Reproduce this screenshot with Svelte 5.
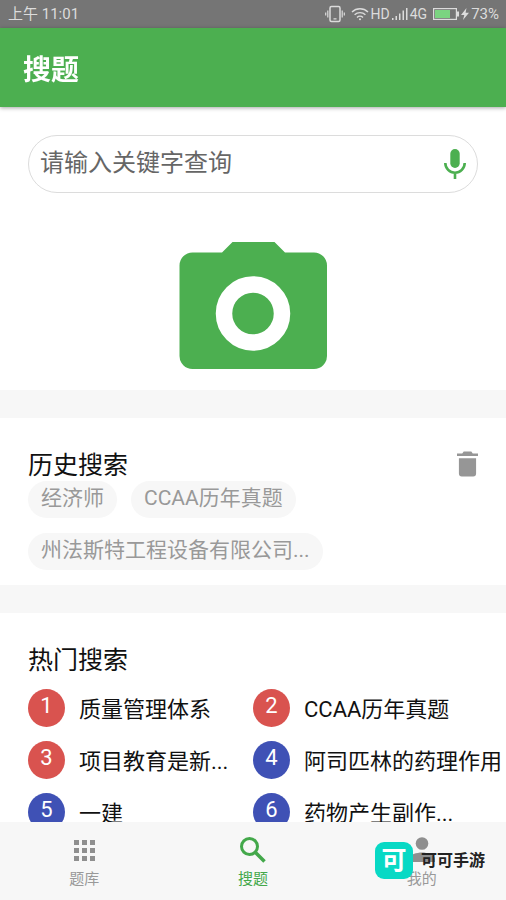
<script>
  let keyword = $state("");
  let history = $state(["经济师", "CCAA历年真题", "州法斯特工程设备有限公司..."]);

  const hot = [
    "质量管理体系",
    "CCAA历年真题",
    "项目教育是新...",
    "阿司匹林的药理作用",
    "一建",
    "药物产生副作...",
  ];

  function clearHistory() {
    history = [];
  }
</script>

<div class="app">
  <div class="status">
    <span>上午 11:01</span>
    <div class="status-icons">
      <svg width="20" height="18" viewBox="0 0 20 18" fill="none" stroke="#dcdcdc">
        <rect x="5" y="1.5" width="10" height="15" rx="1.5" stroke-width="1.5" />
        <path d="M8.5 13.8h3M2.8 5.5v7M17.2 5.5v7M.7 7.5v3M19.3 7.5v3" stroke-width="1.2" />
      </svg>
      <svg class="wifi" width="18" height="14" viewBox="0 0 18 14" fill="none" stroke="#dcdcdc" stroke-width="1.4">
        <path d="M1 5a11.5 11.5 0 0 1 16 0M3.6 7.8a7.8 7.8 0 0 1 10.8 0M6 10.4a4.3 4.3 0 0 1 6 0" />
        <circle cx="9" cy="12.3" r="1" fill="#dcdcdc" stroke="none" />
      </svg>
      <span class="net">HD</span>
      <svg width="16" height="14" viewBox="0 0 16 14" fill="#dcdcdc">
        <path d="M0 11h1.5v2H0zM3.5 9H5v4H3.5zM7 6.5h1.5V13H7zM10.5 3.5H12V13h-1.5zM14 1h1.5v12H14z" />
      </svg>
      <span class="net">4G</span>
      <svg class="battery" width="26" height="12" viewBox="0 0 26 12">
        <rect x=".6" y=".6" width="22.8" height="10.8" fill="none" stroke="#dcdcdc" stroke-width="1.2" />
        <rect x="2" y="2" width="15" height="8" fill="#7bd481" />
        <path d="M24 3.5h2v5h-2z" fill="#dcdcdc" />
      </svg>
      <svg width="8" height="12" viewBox="0 0 8 12" fill="#dcdcdc">
        <path d="M5.5 0 0 7h3.3L2 12l6-7.2H4.6z" />
      </svg>
      <span>73%</span>
    </div>
  </div>

  <header>
    <h1>搜题</h1>
  </header>

  <main>
    <section class="search">
      <div class="search-box">
        <input type="text" aria-label="搜索" placeholder="请输入关键字查询" bind:value={keyword} />
        <button aria-label="语音">
          <svg width="22" height="30" viewBox="0 0 22 30">
            <rect x="6.3" y="0" width="9.4" height="19" rx="4.7" fill="#4caf50" />
            <path d="M1.3 14a9.7 9.7 0 0 0 19.4 0M11 23.5V30" fill="none" stroke="#4caf50" stroke-width="2.6" />
          </svg>
        </button>
      </div>
      <button class="camera" aria-label="拍照">
        <svg width="148" height="127" viewBox="-0.5 0 148 127">
          <path
            fill="#4caf50"
            d="M53 0H95L105.5 10.5H134.5A13 13 0 0 1 147.5 23.5V114A13 13 0 0 1 134.5 127H13A13 13 0 0 1 0 114V23.5A13 13 0 0 1 13 10.5H42.5Z"
          />
          <circle cx="73.5" cy="71.5" r="29" fill="none" stroke="#fff" stroke-width="16.5" />
        </svg>
      </button>
    </section>

    <section class="history">
      <div class="section-head">
        <h2>历史搜索</h2>
        <button aria-label="清空" onclick={clearHistory}>
          <svg width="21" height="26" viewBox="0 0 22 26" fill="#969696">
            <path d="M0 2h5.5L7 0h8l1.5 2H22v2.7H0zM2 7h18v16a3 3 0 0 1-3 3H5a3 3 0 0 1-3-3z" />
          </svg>
        </button>
      </div>
      <div class="chips">
        {#each history as item}
          <button class="chip" onclick={() => (keyword = item)}>{item}</button>
        {/each}
      </div>
    </section>

    <section class="hot">
      <h2>热门搜索</h2>
      <ol>
        {#each hot as item, i}
          <li>
            <span class="rank" class:top={i < 3}>{i + 1}</span>
            <a href="#hot-{i + 1}">{item}</a>
          </li>
        {/each}
      </ol>
    </section>
  </main>

  <nav>
    <a href="#bank">
      <svg width="28" height="28" viewBox="0 0 28 28" fill="#8f8f8f">
        <path d="M4 4h5v5H4zM12 4h5v5h-5zM20 4h5v5h-5zM4 12h5v5H4zM12 12h5v5h-5zM20 12h5v5h-5zM4 20h5v5H4zM12 20h5v5h-5zM20 20h5v5h-5z" />
      </svg>
      <span>题库</span>
    </a>
    <a href="#search" class="active">
      <svg width="28" height="28" viewBox="0 0 28 28" fill="none" stroke="#43a84a">
        <circle cx="10.5" cy="10.5" r="8" stroke-width="3" />
        <path d="M16.5 16.5 25.5 25.5" stroke-width="3.6" />
      </svg>
      <span>搜题</span>
    </a>
    <a href="#me">
      <svg width="28" height="28" viewBox="0 0 28 28" fill="#8f8f8f">
        <circle cx="14" cy="7.5" r="6.3" />
        <path d="M1 26v-3c0-4.5 8-6.5 13-6.5s13 2 13 6.5v3z" />
      </svg>
      <span>我的</span>
    </a>
    <div class="brand">
      <span class="brand-logo">可</span>
      <span>可可手游</span>
    </div>
  </nav>
</div>

<style>
  :global(body) {
    margin: 0;
  }

  .app {
    height: 100vh;
    display: flex;
    flex-direction: column;
    background: #fff;
    color: #111;
    font-family: Roboto, "Noto Sans CJK SC", sans-serif;
  }

  h1,
  h2 {
    margin: 0;
  }

  button {
    padding: 0;
    border: none;
    background: none;
    font: inherit;
    color: inherit;
    cursor: pointer;
  }

  a {
    color: inherit;
    text-decoration: none;
  }

  svg {
    display: block;
  }

  .status {
    height: 28px;
    flex: none;
    display: flex;
    justify-content: space-between;
    align-items: center;
    padding: 0 7px 0 8px;
    background: #757575;
    color: #dcdcdc;
    font-size: 15px;
    line-height: 30px;
  }

  .status-icons {
    display: flex;
    align-items: center;
    gap: 2px;
  }

  .net {
    font-size: 14px;
  }

  .wifi,
  .battery {
    margin-left: 4px;
  }

  header {
    position: relative;
    z-index: 1;
    flex: none;
    padding: 23px 23px 16px;
    background: #4caf50;
    box-shadow: 0 1px 4px rgba(0, 0, 0, 0.35);
  }

  h1 {
    color: #fff;
    font-size: 28px;
    font-weight: 700;
    line-height: 40px;
  }

  main {
    flex: 1;
    min-height: 0;
    display: flex;
    flex-direction: column;
    gap: 28px;
    overflow-x: hidden;
    overflow-y: auto;
    scrollbar-width: none;
    background: #f7f7f7;
  }

  section {
    flex: none;
    padding: 28px;
    background: #fff;
  }

  .search {
    padding-bottom: 21px;
  }

  .search-box {
    display: flex;
    align-items: center;
    padding: 0 11px;
    border: 1px solid #dcdcdc;
    border-radius: 29px;
  }

  .search-box input {
    flex: 1;
    min-width: 0;
    height: 56px;
    padding: 0 0 2px;
    border: none;
    outline: none;
    background: none;
    font: inherit;
    font-size: 24px;
    box-sizing: border-box;
  }

  .search-box input::placeholder {
    color: #666;
    opacity: 1;
  }

  .camera {
    display: block;
    margin: 49px auto 0;
  }

  .history {
    padding-bottom: 15px;
  }

  .section-head {
    display: flex;
    justify-content: space-between;
    align-items: center;
  }

  h2 {
    padding-top: 4px;
    font-size: 25px;
    font-weight: 400;
    line-height: 31px;
  }

  .chips {
    display: flex;
    flex-wrap: wrap;
    gap: 15px 14px;
  }

  .chip {
    padding: 0 13px 2px;
    border-radius: 19px;
    background: #f7f7f7;
    color: #999;
    font-size: 21px;
    line-height: 35px;
  }

  ol {
    display: grid;
    grid-template-columns: 1fr 1fr;
    row-gap: 14px;
    margin: 13px 0 0;
    padding: 0;
    list-style: none;
  }

  li {
    display: flex;
    align-items: center;
    gap: 14px;
    min-width: 0;
    font-size: 22px;
    line-height: 34px;
    white-space: nowrap;
  }

  li a {
    padding-top: 4px;
  }

  .rank {
    flex: none;
    width: 37px;
    padding-bottom: 4px;
    border-radius: 50%;
    background: #3f51b5;
    color: #fff;
    text-align: center;
  }

  .rank.top {
    background: #d9534f;
  }

  nav {
    position: relative;
    flex: none;
    display: flex;
    padding: 14px 0 10px;
    background: #f7f7f7;
    color: #999;
  }

  nav a {
    flex: 1;
    display: flex;
    flex-direction: column;
    align-items: center;
    gap: 4px;
    font-size: 15px;
    line-height: 22px;
  }

  nav a.active {
    color: #43a84a;
  }

  /* floats over the last tab */
  .brand {
    position: absolute;
    right: 21px;
    top: 20px;
    display: flex;
    align-items: center;
    gap: 8px;
    color: #222;
    font-size: 16px;
    font-weight: 700;
    line-height: 37px;
    pointer-events: none;
  }

  .brand-logo {
    width: 38px;
    border-radius: 9px;
    background: #08d9c5;
    color: #fff;
    font-size: 25px;
    text-align: center;
  }
</style>
